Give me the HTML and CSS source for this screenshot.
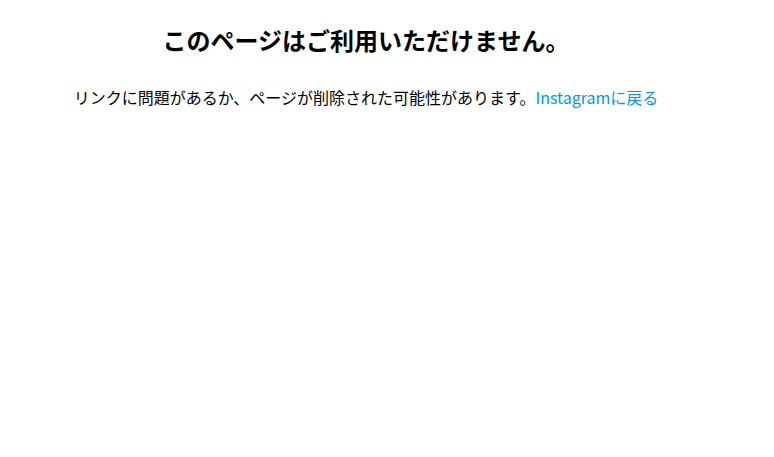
FILE: index.html
```html
<!DOCTYPE html>
<html lang="ja">
<head>
<meta charset="utf-8">
<title>ページが見つかりません</title>
<link rel="stylesheet" href="styles.css">
</head>
<body>
<main class="error">
  <h2 class="error-title">このページはご利用いただけません。</h2>
  <p class="error-text">リンクに問題があるか、ページが削除された可能性があります。<a class="error-link" href="#">Instagramに戻る</a></p>
</main>
</body>
</html>
```

FILE: styles.css
```css
html, body {
  margin: 0;
  padding: 0;
  background: #ffffff;
}
body {
  font-family: "Noto Sans CJK JP", "Noto Sans", sans-serif;
  color: #000000;
}
.error {
  width: 732px;
  text-align: center;
  padding-top: 25px;
}
.error-title {
  font-size: 24px;
  font-weight: 700;
  line-height: 30px;
  margin: 0 0 30px;
}
.error-text {
  font-size: 16px;
  line-height: 24px;
  margin: 0;
}
.error-link {
  color: #0095f6;
  text-decoration: none;
}
```
